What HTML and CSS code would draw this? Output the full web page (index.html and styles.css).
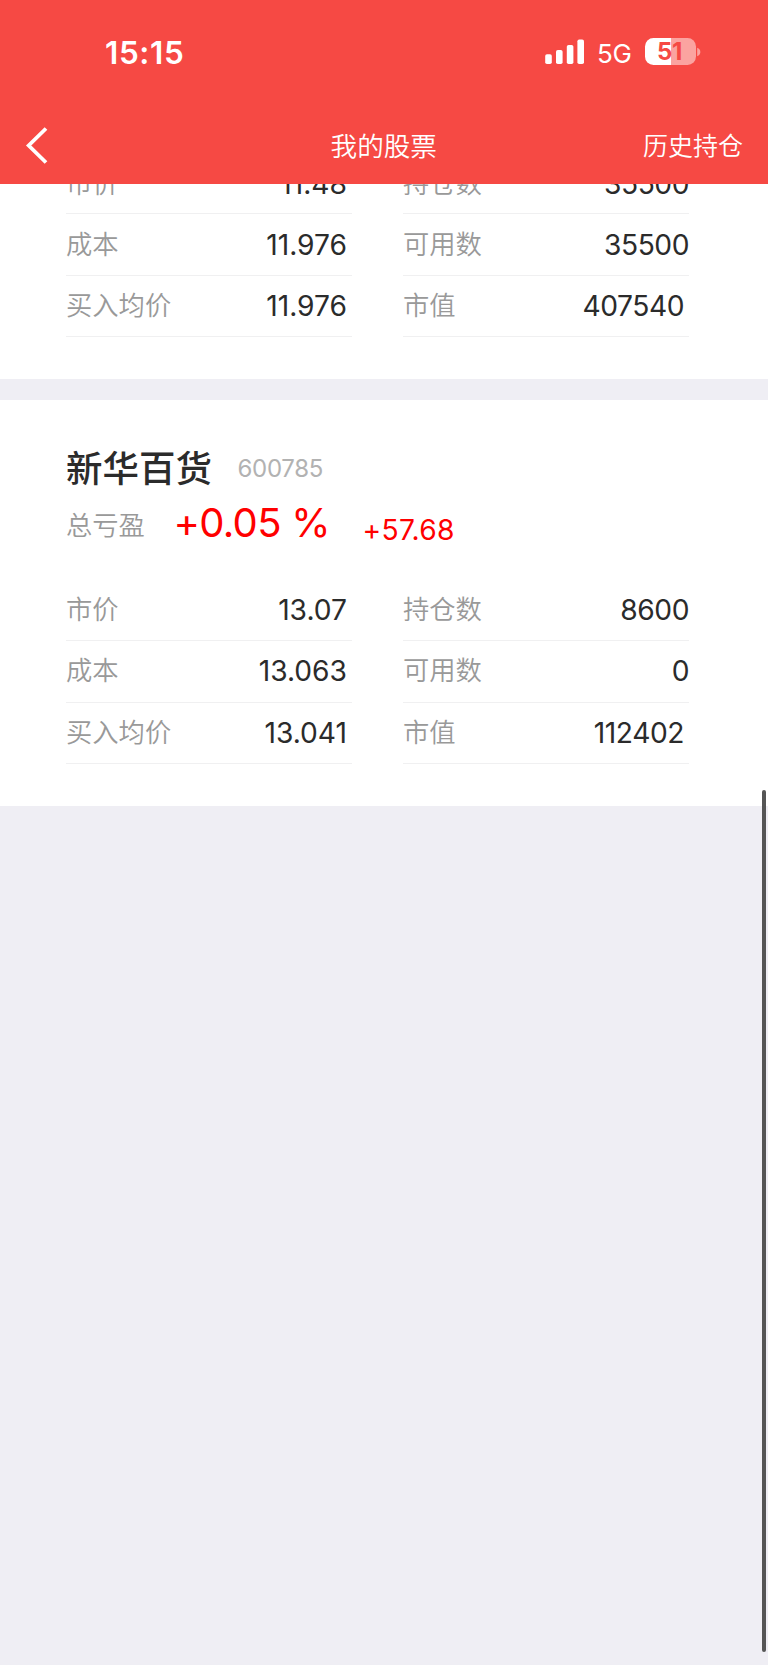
FILE: index.html
```html
<!DOCTYPE html>
<html lang="zh-CN">
<head>
<meta charset="utf-8">
<title>我的股票</title>
<link rel="stylesheet" href="styles.css">
</head>
<body>
<div class="screen">
  <header class="header">
    <div class="status">
      <span class="time">15:15</span>
      <div class="indicators">
        <svg class="signal" width="40" height="26" viewBox="0 0 40 26" fill="#fff">
          <rect x="0.2" y="15.2" width="6.6" height="9.8" rx="1.8"/>
          <rect x="11" y="11" width="6.6" height="14" rx="1.8"/>
          <rect x="21.8" y="6" width="6.6" height="19" rx="1.8"/>
          <rect x="32.4" y="0.4" width="6.6" height="24.6" rx="1.8"/>
        </svg>
        <span class="network">5G</span>
        <div class="battery">
          <span class="level">51</span>
          <svg class="cap" width="5" height="10" viewBox="0 0 5 10"><path d="M1.2 0.8C5.4 2 5.4 8 1.2 9.2Z" fill="#fba3a0"/></svg>
        </div>
      </div>
    </div>
    <nav class="nav">
      <svg class="back" width="24" height="38" viewBox="0 0 24 38" fill="none" stroke="#fff" stroke-width="3.8"><path d="M21 2.5L3.7 19.5L21 36.5"/></svg>
      <h1 class="title">我的股票</h1>
      <a class="history">历史持仓</a>
    </nav>
  </header>
  <main class="content">
    <section class="card card-scrolled">
      <div class="grid">
        <dl class="column">
          <div class="row"><dt>市价</dt><dd>11.48</dd></div>
          <div class="row"><dt>成本</dt><dd>11.976</dd></div>
          <div class="row"><dt>买入均价</dt><dd>11.976</dd></div>
        </dl>
        <dl class="column column-right">
          <div class="row"><dt>持仓数</dt><dd>35500</dd></div>
          <div class="row"><dt>可用数</dt><dd>35500</dd></div>
          <div class="row row-value"><dt>市值</dt><dd>407540</dd></div>
        </dl>
      </div>
    </section>
    <section class="card card-full">
      <div class="stock"><h2 class="name">新华百货</h2><span class="code">600785</span></div>
      <div class="profit"><span class="label">总亏盈</span><span class="percent">+0.05 %</span><span class="amount">+57.68</span></div>
      <div class="grid">
        <dl class="column">
          <div class="row"><dt>市价</dt><dd>13.07</dd></div>
          <div class="row"><dt>成本</dt><dd>13.063</dd></div>
          <div class="row"><dt>买入均价</dt><dd>13.041</dd></div>
        </dl>
        <dl class="column column-right">
          <div class="row"><dt>持仓数</dt><dd>8600</dd></div>
          <div class="row"><dt>可用数</dt><dd>0</dd></div>
          <div class="row row-value"><dt>市值</dt><dd>112402</dd></div>
        </dl>
      </div>
    </section>
  </main>
  <div class="scrollbar"></div>
</div>
</body>
</html>
```
FILE: styles.css
```css
* { box-sizing: border-box; margin: 0; padding: 0; }
body { background: #efeef4; font-family: Inter, "Noto Sans CJK SC", sans-serif; }
.screen { position: relative; height: 1665px; overflow: hidden; background: #efeef4; }
.header { height: 184px; background: #f64944; color: #fff; }
.status { height: 106px; padding: 0 68px 0 105px; display: flex; justify-content: space-between; align-items: center; }
.time { font-size: 31.5px; font-weight: 600; line-height: 40px; letter-spacing: 0.6px; }
.indicators { display: flex; align-items: center; }
.signal { margin-top: -2px; }
.network { width: 36px; margin: 1px 0 0 12px; font-size: 26px; font-weight: 400; line-height: 36px; letter-spacing: -0.4px; }
.battery { position: relative; width: 51px; height: 27px; margin: -3px 4px 0 12px; border-radius: 8.5px; background: linear-gradient(90deg, #fff 51%, #fba3a0 51%); }
.level { display: block; padding-right: 2px; text-align: center; color: #f64944; font-size: 24px; font-weight: 700; line-height: 28px; letter-spacing: -0.4px; }
.cap { position: absolute; left: 51px; top: 9px; }
.nav { height: 78px; padding: 0 25px 0 24.5px; display: grid; grid-template-columns: 1fr auto 1fr; align-items: center; }
.back { margin-top: -1px; }
.title { padding-top: 2px; font-size: 26.6px; font-weight: 350; line-height: 40px; }
.history { padding-top: 2px; justify-self: end; font-size: 25px; font-weight: 350; line-height: 40px; }
.content { display: flex; flex-direction: column; gap: 21px; }
.card { height: 406px; padding: 45px 78px 42px 66px; background: #fff; }
.card-scrolled { height: 195px; padding-top: 0; display: flex; flex-direction: column; justify-content: flex-end; overflow: hidden; }
.grid { display: grid; grid-template-columns: 286px 286px; gap: 51px; }
.row { height: 61.35px; display: flex; justify-content: space-between; align-items: center; border-bottom: 1px solid #f0f0f1; padding: 0 5px 0 0; }
.row dt { font-size: 26.3px; font-weight: 350; line-height: 38px; color: #999; }
.row dd { font-size: 28.2px; font-weight: 370; line-height: 38px; color: #2b2b2b; letter-spacing: 0; }
.card-scrolled .row:not(:last-child) { padding-top: 2px; }
.card-full .row:nth-child(2) { padding-bottom: 1px; }
.column-right .row { padding-right: 0; }
.column-right .row dd { letter-spacing: -0.45px; }
.column-right .row-value { padding-right: 5px; }
.stock { height: 48px; display: flex; align-items: center; gap: 25.5px; }
.name { font-size: 36.5px; font-weight: 500; line-height: 48px; color: #2b2b2b; }
.code { font-size: 24px; font-weight: 370; line-height: 36px; color: #b2b2b2; letter-spacing: -0.3px; }
.profit { height: 87px; display: flex; align-items: flex-start; color: #f00; }
.label { width: 107.5px; padding-top: 2px; font-size: 26.3px; font-weight: 350; color: #999; line-height: 62px; }
.percent { width: 189px; font-size: 40px; line-height: 60px; font-weight: 370; letter-spacing: -0.7px; }
.amount { padding-top: 6px; font-size: 28.2px; font-weight: 370; line-height: 62px; letter-spacing: 0.3px; }
.scrollbar { position: absolute; right: 2px; top: 790px; width: 4px; height: 862px; border-radius: 2px; background: #555; }
```
